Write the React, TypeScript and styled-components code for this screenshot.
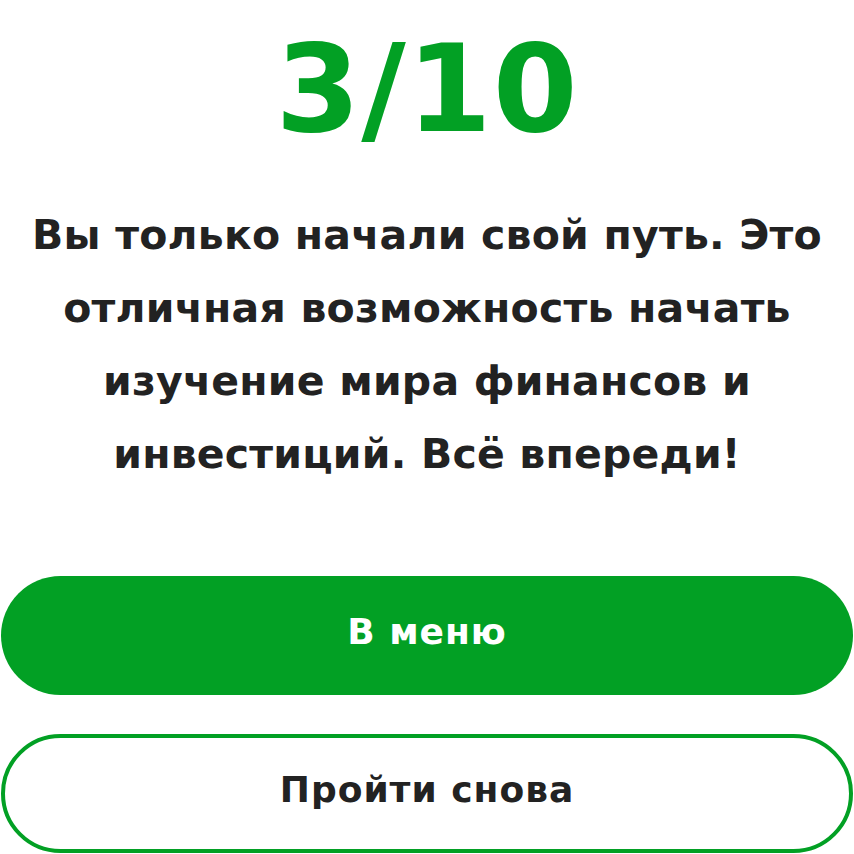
import styled, { createGlobalStyle } from 'styled-components'

const GlobalStyle = createGlobalStyle`
  html, body {
    margin: 0;
    padding: 0;
    background: #ffffff;
  }
  body {
    font-family: 'DejaVu Sans', Inter, sans-serif;
  }
`

const Page = styled.div`
  display: flex;
  flex-direction: column;
  align-items: center;
  padding: 27px 1px 0;
`
const Score = styled.div`
  font-size: 122px;
  font-weight: 700;
  line-height: 124px;
  letter-spacing: 1px;
  color: #02a024;
`
const Message = styled.p`
  margin: 48px 0 0;
  font-size: 41px;
  font-weight: 700;
  line-height: 73px;
  letter-spacing: 0.2px;
  color: #222222;
  text-align: center;
`
const Actions = styled.div`
  display: flex;
  flex-direction: column;
  gap: 39px;
  width: 100%;
  margin-top: 85px;
`
const Button = styled.button<{ $primary?: boolean }>`
  height: 119px;
  width: 100%;
  padding: 0 0 8px;
  border-radius: 60px;
  font-family: inherit;
  font-size: 36px;
  font-weight: 700;
  letter-spacing: 1px;
  cursor: pointer;
  background: ${(p) => (p.$primary ? '#02a024' : '#ffffff')};
  color: ${(p) => (p.$primary ? '#ffffff' : '#222222')};
  border: ${(p) => (p.$primary ? '0' : '4px solid #02a024')};
`

export default function App() {
  return (
    <>
      <GlobalStyle />
      <Page>
        <Score>3/10</Score>
        <Message>
          Вы только начали свой путь. Это
          <br />
          отличная возможность начать
          <br />
          изучение мира финансов и
          <br />
          инвестиций. Всё впереди!
        </Message>
        <Actions>
          <Button $primary>В меню</Button>
          <Button>Пройти снова</Button>
        </Actions>
      </Page>
    </>
  )
}
